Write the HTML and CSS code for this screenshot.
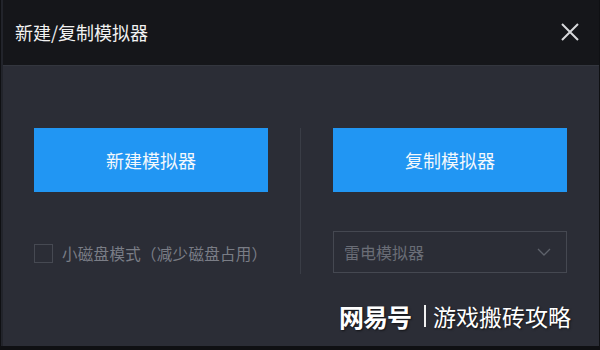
FILE: index.html
```html
<!DOCTYPE html>
<html lang="zh-CN">
<head>
<meta charset="utf-8">
<link rel="stylesheet" href="styles.css">
</head>
<body>
<div class="window">
  <div class="titlebar">
    <span class="title">新建/复制模拟器</span>
    <svg class="close" width="20" height="20" viewBox="0 0 20 20"><path d="M2 2 L18 18 M18 2 L2 18" stroke="#d8d9dc" stroke-width="2" fill="none"/></svg>
  </div>
  <div class="content">
    <div class="col">
      <button class="btn">新建模拟器</button>
      <label class="check">
        <span class="box"></span>
        <span class="check-text">小磁盘模式（减少磁盘占用）</span>
      </label>
    </div>
    <div class="divider"></div>
    <div class="col">
      <button class="btn">复制模拟器</button>
      <div class="select">
        <span class="select-text">雷电模拟器</span>
        <svg width="14" height="8" viewBox="0 0 14 8"><path d="M1 1 L7 7 L13 1" stroke="#5e626b" stroke-width="1.3" fill="none"/></svg>
      </div>
    </div>
  </div>
  <div class="watermark">
    <span class="wm-logo">网易号</span>
    <span class="wm-bar"></span>
    <span class="wm-text">游戏搬砖攻略</span>
  </div>
</div>
</body>
</html>
```

FILE: styles.css
```css
* { box-sizing: border-box; }
html, body { margin: 0; padding: 0; }
body {
  width: 600px;
  height: 350px;
  background: #0f1013;
  font-family: "Noto Sans CJK SC", "Microsoft YaHei", sans-serif;
  overflow: hidden;
}
.window {
  position: relative;
  width: 598px;
  height: 346px;
  margin-left: 1px;
  display: flex;
  flex-direction: column;
  background: #2b2d36;
  border-left: 2px solid #22242b;
}
.titlebar {
  height: 65px;
  flex: none;
  background: #15161a;
  display: flex;
  align-items: center;
  justify-content: space-between;
  padding: 0 19px 0 12px;
}
.title {
  color: #f2f2f2;
  font-size: 18px;
  line-height: 1;
  margin-top: -2px;
}
.close { margin-top: -1px; }
.content {
  flex: 1;
  border-top: 1px solid #33363e;
  display: flex;
  padding: 62px 30px 0 31px;
}
.col {
  width: 234px;
  display: flex;
  flex-direction: column;
}
.divider {
  width: 1px;
  margin: 0 32px;
  height: 146px;
  background: #3a3d46;
}
.btn {
  height: 64px;
  border: none;
  background: #2196f3;
  color: #f4f8fc;
  font-family: inherit;
  font-size: 18px;
  padding: 0;
  margin: 0;
}
.check {
  display: flex;
  align-items: center;
  margin-top: 51px;
  height: 20px;
}
.box {
  width: 19px;
  height: 19px;
  border: 1px solid #464952;
  margin-right: 9px;
  flex: none;
}
.check-text {
  color: #7a7d86;
  font-size: 15.5px;
  white-space: nowrap;
  letter-spacing: 0.3px;
}
.select {
  margin-top: 39px;
  height: 42px;
  border: 1px solid #454851;
  display: flex;
  align-items: center;
  justify-content: space-between;
  padding: 0 15px 0 10px;
}
.select-text {
  color: #6a6d76;
  font-size: 16px;
}
.watermark {
  position: absolute;
  left: 336px;
  top: 298px;
  display: flex;
  align-items: center;
  color: #ffffff;
  text-shadow: 1px 1px 2px rgba(0,0,0,0.6);
}
.wm-logo {
  font-size: 25px;
  font-weight: 700;
  letter-spacing: -1px;
}
.wm-bar {
  width: 2px;
  height: 22px;
  background: #f0f0f0;
  margin: 0 7px 0 13px;
}
.wm-text {
  font-size: 23px;
  letter-spacing: 0px;
}
```
